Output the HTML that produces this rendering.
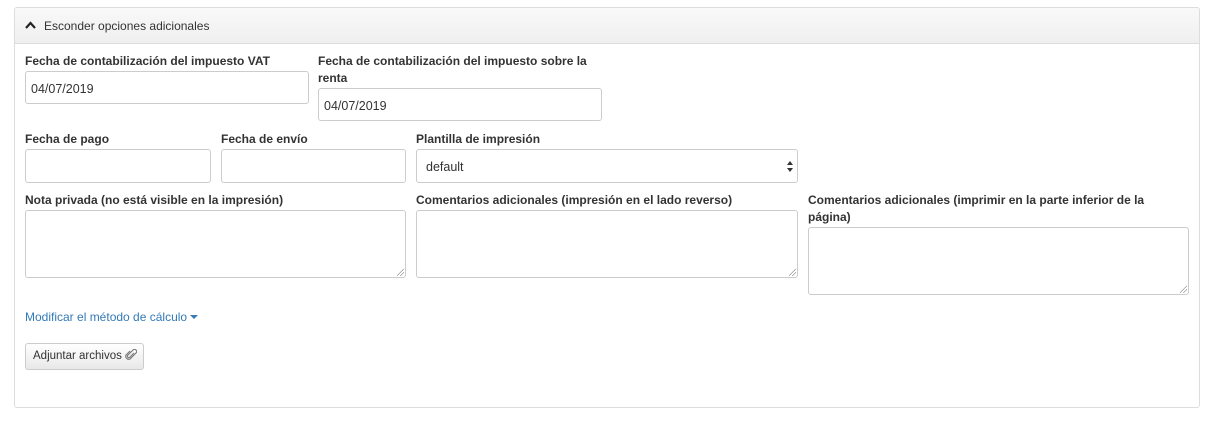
<html><head><style>
body{margin:0;background:#fff;font-family:"Liberation Sans",sans-serif;font-size:12px;color:#333}
.p{position:absolute;left:14px;top:7px;width:1184px;height:399px;border:1px solid #ddd;border-radius:3px}
.h{position:absolute;left:0;top:0;right:0;height:35px;background:linear-gradient(#f9f9f9,#efefef);border-bottom:1px solid #ddd;border-radius:3px 3px 0 0}
.h span{position:absolute;left:29px;top:11px;color:#333}
.l{position:absolute;font-weight:bold;line-height:17px;color:#333}
.i{position:absolute;box-sizing:border-box;border:1px solid #ccc;border-radius:3px;background:#fff;padding:1px 5px 0;line-height:33px;font-size:12.5px}
.t::after{content:"";position:absolute;right:1px;bottom:1px;width:7px;height:7px;background:linear-gradient(135deg,transparent 45%,#999 45%,#999 52%,transparent 52%,transparent 70%,#999 70%,#999 77%,transparent 77%)}
a{position:absolute;color:#337ab7;text-decoration:none}
.b{position:absolute;left:25px;top:343px;width:119px;height:27px;box-sizing:border-box;border:1px solid #ccc;border-radius:3px;background:linear-gradient(#fff,#e8e8e8);line-height:25px;padding-left:7px;font-size:11.5px}
</style></head><body>
<div class="p"><div class="h"><svg style="position:absolute;left:10px;top:13px" width="11" height="8"><path d="M1 7L5.5 2L10 7" stroke="#222" stroke-width="2.2" fill="none"/></svg><span>Esconder opciones adicionales</span></div></div>
<div class="l" style="left:25px;top:53px">Fecha de contabilización del impuesto VAT</div>
<div class="i" style="left:25px;top:71px;width:284px;height:33px">04/07/2019</div>
<div class="l" style="left:318px;top:53px;width:290px">Fecha de contabilización del impuesto sobre la renta</div>
<div class="i" style="left:318px;top:88px;width:284px;height:33px">04/07/2019</div>
<div class="l" style="left:25px;top:131px">Fecha de pago</div>
<div class="i" style="left:25px;top:149px;width:186px;height:34px"></div>
<div class="l" style="left:221px;top:131px">Fecha de envío</div>
<div class="i" style="left:221px;top:149px;width:185px;height:34px"></div>
<div class="l" style="left:416px;top:131px">Plantilla de impresión</div>
<div class="i" style="left:416px;top:149px;width:382px;height:34px;padding-left:9px">default<svg style="position:absolute;right:4px;top:10px" width="6" height="13"><path d="M0 5L3 1L6 5ZM0 8L3 12L6 8Z" fill="#333"/></svg></div>
<div class="l" style="left:25px;top:192px">Nota privada (no está visible en la impresión)</div>
<div class="i t" style="left:25px;top:210px;width:381px;height:68px"></div>
<div class="l" style="left:416px;top:192px">Comentarios adicionales (impresión en el lado reverso)</div>
<div class="i t" style="left:416px;top:210px;width:382px;height:68px"></div>
<div class="l" style="left:808px;top:192px;width:360px">Comentarios adicionales (imprimir en la parte inferior de la página)</div>
<div class="i t" style="left:808px;top:227px;width:381px;height:68px"></div>
<a style="left:25px;top:310px">Modificar el método de cálculo <svg width="8" height="5" style="vertical-align:middle"><path d="M0 0H8L4 4Z" fill="#337ab7"/></svg></a>
<div class="b">Adjuntar archivos <svg width="12" height="12" style="vertical-align:-2px"><path d="M9 4L4.5 8.5a1.5 1.5 0 0 1-2-2L8 1a2 2 0 0 1 3 3L5 10a3 3 0 0 1-4-4L5 2" stroke="#777" stroke-width="1.1" fill="none"/></svg></div>
</body></html>
